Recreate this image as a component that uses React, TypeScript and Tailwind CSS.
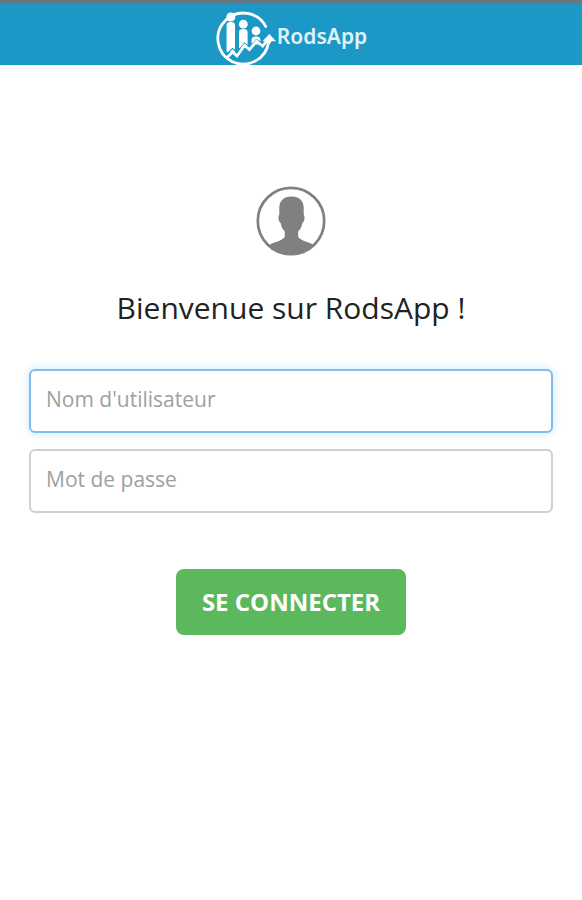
import { useState } from 'react';

interface FormInputProps {
  label: string;
  name: string;
  type?: string;
  value: string;
  onChange: (value: string) => void;
  active?: boolean;
  onFocus: () => void;
}

function FormInput({ label, name, type = 'text', value, onChange, active = false, onFocus }: FormInputProps) {
  return (
    <input
      name={name}
      type={type}
      aria-label={label}
      placeholder={label}
      value={value}
      onChange={(e) => onChange(e.target.value)}
      onFocus={onFocus}
      className={`block w-full h-16 rounded-md border-2 bg-white px-[15px] pb-1 text-[21px] text-gray-800 placeholder-[#a0a0a0] outline-none ${
        active ? 'border-[#82bcee] shadow-[0_0_8px_1px_#d3ecfb]' : 'border-[#d0d0d0]'
      }`}
    />
  );
}

function Logo() {
  return (
    <svg viewBox="214 8 62 58" className="h-[58px] w-[62px]" fill="none" aria-hidden="true">
      <path d="M265.300 27.500A25.500 25.500 0 1 0 267.600 42" stroke="#fff" strokeWidth="2.800" />
      {/* people, from tallest to shortest */}
      <g fill="#fff">
        <circle cx="229.800" cy="17" r="4.500" />
        <path d="M225.600 25q0-3 4.200-3t4.200 3v27h-8.400z" />
        <circle cx="242.300" cy="24.200" r="4.400" />
        <path d="M238 32q0-3 4.300-3t4.300 3v16h-8.600z" />
        <circle cx="255" cy="31" r="4.400" />
        <path d="M250.600 39.500q0-3 4.400-3t4.400 3v5h-8.800z" />
      </g>
      <path d="M224.500 55l7-6.500 4.500 4 7.500-9.500 5 4 7-7.500 6 4" stroke="#1c98c6" strokeWidth="1.200" />
      <path d="M225.500 58l6.200-6 4.300 4 7.500-10.500 5 4 7-8.300 6.200 5 5.500-7" stroke="#fff" strokeWidth="2.700" />
      <path d="M268.300 34l6.700 7.300h-4.500l-1.700 3-3.300-3h-4z" fill="#fff" />
    </svg>
  );
}

function Avatar() {
  return (
    <svg viewBox="0 0 70 70" className="h-[70px] w-[70px]" role="img" aria-label="Profil">
      <defs>
        <clipPath id="disc">
          <circle cx="35" cy="35" r="33" />
        </clipPath>
      </defs>
      <path
        clipPath="url(#disc)"
        fill="#808080"
        d="M35.500 10.500c-8 0-12.200 4.500-12.200 11.500v7c-1.600.8-.8 7 1.300 8 .6 3.500 2 6.500 4.200 8.500v5c-1.300 3.500-8.300 5-13.800 7.500-2 1-4 3-5 5v7h50v-7c-1-2-2-4-4-5-5.500-2.500-12.500-4-13.800-7.500v-5c2.200-2 3.600-5 4.200-8.500 2.100-1 2.900-7.200 1.300-8v-7c0-7-4.200-11.500-12.200-11.500z"
      />
      <circle cx="35" cy="35" r="33.200" fill="none" stroke="#808080" strokeWidth="2.700" />
    </svg>
  );
}

export default function App() {
  const [username, setUsername] = useState('');
  const [password, setPassword] = useState('');
  const [activeField, setActiveField] = useState('username');

  return (
    <div className="min-h-screen bg-white font-['Open_Sans',sans-serif]">
      <header className="flex items-start justify-center border-t-4 border-[#657780] bg-[#1c98c6] pt-1">
        <div className="-mb-px">
          <Logo />
        </div>
        <span className="pt-2.5 font-['Noto_Sans',sans-serif] text-[21px] font-semibold leading-9 text-[#e0f2fa]">RodsApp</span>
      </header>

      <main className="px-[29px] pt-[121px]">
        <div className="flex flex-col items-center">
          <Avatar />
          <h1 className="mt-8 text-[30px] leading-10 text-[#222]">Bienvenue sur RodsApp !</h1>
        </div>

        <form className="mt-[41px] flex flex-col gap-4" onSubmit={(e) => e.preventDefault()}>
          <FormInput
            label="Nom d'utilisateur"
            name="username"
            value={username}
            onChange={setUsername}
            active={activeField === 'username'}
            onFocus={() => setActiveField('username')}
          />
          <FormInput
            label="Mot de passe"
            name="password"
            type="password"
            value={password}
            onChange={setPassword}
            active={activeField === 'password'}
            onFocus={() => setActiveField('password')}
          />
          <button
            type="submit"
            className="mt-10 self-center rounded-lg bg-[#5cb85c] px-[26px] py-[17px] text-2xl font-bold leading-8 text-white"
          >
            SE CONNECTER
          </button>
        </form>
      </main>
    </div>
  );
}
